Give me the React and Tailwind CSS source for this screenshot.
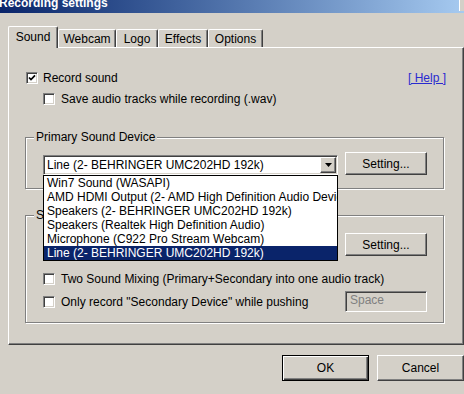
import React from 'react';

// classic win2k bevels
const raised =
  'border border-t-white border-l-white border-r-[#404040] border-b-[#404040] shadow-[inset_-1px_-1px_0_#808080]';
const sunken =
  'border border-t-[#808080] border-l-[#808080] border-r-white border-b-white shadow-[inset_1px_1px_0_#404040,inset_-1px_-1px_0_#d4d0c8]';

const devices = [
  'Win7 Sound (WASAPI)',
  'AMD HDMI Output (2- AMD High Definition Audio Device)',
  'Speakers (2- BEHRINGER UMC202HD 192k)',
  'Speakers (Realtek High Definition Audio)',
  'Microphone (C922 Pro Stream Webcam)',
  'Line (2- BEHRINGER UMC202HD 192k)',
];

const tabs = [
  { name: 'Sound', w: 'w-[50px]' },
  { name: 'Webcam', w: 'w-[58px]' },
  { name: 'Logo', w: 'w-[42px]' },
  { name: 'Effects', w: 'w-[50px]' },
  { name: 'Options', w: 'w-[55px]' },
];

const Checkbox = ({ checked }) => (
  <span className={`flex w-[12px] h-[12px] shrink-0 items-center justify-center bg-white ${sunken}`}>
    {checked && (
      <svg width="8" height="8" viewBox="0 0 8 8">
        <path d="M1 3.5 L3 5.6 L7 1.4" fill="none" stroke="#000" strokeWidth="1.7" />
      </svg>
    )}
  </span>
);

const Button = ({ children, className = '' }) => (
  <button className={`flex items-center justify-center bg-[#d4d0c8] text-black leading-[14px] ${raised} ${className}`}>
    {children}
  </button>
);

const GroupBox = ({ label, className = '', children }) => (
  <div
    className={`relative ml-[16px] w-[419px] border border-[#808080] shadow-[inset_1px_1px_0_white,1px_1px_0_white] ${className}`}
  >
    <span className="absolute -top-[8px] left-[8px] bg-[#d4d0c8] px-[2px] leading-[14px] whitespace-nowrap">
      {label}
    </span>
    {children}
  </div>
);

const Combo = ({ value, open }) => (
  <div className={`relative w-[295px] h-[20px] p-[1px] bg-white ${sunken}`}>
    <div className="flex h-full">
      <span className="flex-1 pl-[2px] leading-[16px] whitespace-nowrap overflow-hidden">{value}</span>
      <span className={`flex w-[16px] h-full items-center justify-center bg-[#d4d0c8] ${raised}`}>
        <svg width="7" height="4" viewBox="0 0 7 4">
          <polygon points="0,0 7,0 3.5,4" fill="#000" />
        </svg>
      </span>
    </div>
    {open && (
      <ul className="absolute left-[-1px] top-[19px] z-20 w-[295px] border border-black bg-white">
        {devices.map((d, i) => (
          <li
            key={d}
            className={`h-[14px] pl-[3px] leading-[14px] whitespace-nowrap overflow-hidden ${
              i === devices.length - 1 ? 'bg-[#0a246a] text-white' : 'text-black'
            }`}
          >
            {d}
          </li>
        ))}
      </ul>
    )}
  </div>
);

export default function App() {
  return (
    <div className="w-[464px] h-[394px] overflow-hidden bg-[#d4d0c8] text-black text-[12px] font-['Liberation_Sans',Arial,sans-serif]">
      {/* title bar */}
      <div className="flex h-[13px] overflow-hidden bg-gradient-to-r from-[#0a246a] to-[#a6caf0]">
        <div className="flex-1 -mt-[3px] -ml-[1px] leading-[13px] font-bold text-white whitespace-nowrap">
          Recording settings
        </div>
        <div className="w-[5px] h-[11px] bg-[#d4d0c8] border-l border-white" />
      </div>

      {/* tabs */}
      <div className="flex h-[21px] mt-[13px] ml-[8px]">
        {tabs.map((t, i) =>
          i === 0 ? (
            <div
              key={t.name}
              className={`relative z-10 self-start h-[22px] pt-[3px] text-center leading-[14px] bg-[#d4d0c8] border-t border-l border-r border-t-white border-l-white border-r-[#404040] shadow-[inset_-1px_0_0_#808080] rounded-t-[2px] ${t.w}`}
            >
              {t.name}
            </div>
          ) : (
            <div
              key={t.name}
              className={`self-end h-[18px] pt-[2px] text-center leading-[14px] border-t border-l border-r border-t-white border-l-white border-r-[#404040] shadow-[inset_-1px_0_0_#808080] rounded-t-[2px] ${t.w}`}
            >
              {t.name}
            </div>
          )
        )}
      </div>

      {/* tab panel */}
      <div className={`ml-[8px] w-[456px] h-[298px] ${raised}`}>
        <div className="flex h-[14px] mt-[23px] ml-[17px] pr-[17px] items-center">
          <Checkbox checked />
          <span className="ml-[5px] leading-[14px]">Record sound</span>
          <a className="ml-auto leading-[14px] text-[#2a2ad0] underline">[ Help ]</a>
        </div>
        <div className="flex h-[14px] mt-[7px] ml-[34px] items-center">
          <Checkbox />
          <span className="ml-[6px] leading-[14px]">Save audio tracks while recording (.wav)</span>
        </div>

        <GroupBox label="Primary Sound Device" className="mt-[31px] h-[52px]">
          <div className="flex items-end gap-[7px] pt-[14px] pl-[17px]">
            <div className="mb-0">
              <Combo value="Line (2- BEHRINGER UMC202HD 192k)" open />
            </div>
            <Button className="w-[82px] h-[23px]">Setting...</Button>
          </div>
        </GroupBox>

        <GroupBox label="Secondary Sound Device" className="mt-[26px] h-[108px]">
          <div className="flex items-end gap-[7px] pt-[17px] pl-[17px]">
            <Combo value="" />
            <Button className="w-[82px] h-[23px]">Setting...</Button>
          </div>
          <div className="flex h-[14px] mt-[16px] pl-[17px] items-center">
            <Checkbox />
            <span className="ml-[6px] leading-[14px]">Two Sound Mixing (Primary+Secondary into one audio track)</span>
          </div>
          <div className="flex h-[21px] mt-[5px] pl-[17px] pr-[16px] items-center">
            <Checkbox />
            <span className="ml-[6px] leading-[14px]">Only record "Secondary Device" while pushing</span>
            <div className={`ml-auto w-[82px] h-[21px] pl-[4px] leading-[17px] text-[#808080] ${sunken}`}>Space</div>
          </div>
        </GroupBox>
      </div>

      {/* dialog buttons */}
      <div className="flex justify-end gap-[8px] mt-[10px]">
        <button className="w-[87px] h-[26px] border border-black bg-[#d4d0c8] shadow-[inset_1px_1px_0_white,inset_-1px_-1px_0_#404040,inset_-2px_-2px_0_#808080] leading-[14px]">
          OK
        </button>
        <Button className="w-[87px] h-[26px]">Cancel</Button>
      </div>
    </div>
  );
}
